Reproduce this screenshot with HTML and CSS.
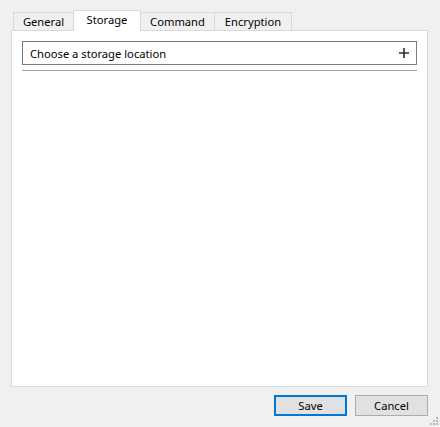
FILE: index.html
```html
<!DOCTYPE html>
<html>
<head>
<meta charset="utf-8">
<link rel="stylesheet" href="styles.css">
</head>
<body>
<div class="window">
  <div class="tabs">
    <div class="tab t-general">General</div>
    <div class="tab t-storage active">Storage</div>
    <div class="tab t-command">Command</div>
    <div class="tab t-encryption">Encryption</div>
  </div>
  <div class="panel">
    <div class="picker">
      <span class="picker-label">Choose a storage location</span>
      <svg class="plus" width="10" height="10" viewBox="0 0 10 10"><path d="M5 0V10M0 5H10" stroke="#2b2b2b" stroke-width="1.6"/></svg>
    </div>
    <div class="sep"></div>
  </div>
  <div class="actions">
    <button class="btn primary">Save</button>
    <button class="btn">Cancel</button>
  </div>
  <div class="grip">
    <svg width="8" height="8" viewBox="0 0 8 8" fill="#b8b8b8">
      <rect x="6" y="0" width="2" height="2"/>
      <rect x="3" y="3" width="2" height="2"/><rect x="6" y="3" width="2" height="2"/>
      <rect x="0" y="6" width="2" height="2"/><rect x="3" y="6" width="2" height="2"/><rect x="6" y="6" width="2" height="2"/>
    </svg>
  </div>
</div>
</body>
</html>
```
FILE: styles.css
```css
html, body {
  margin: 0;
  padding: 0;
  background: #f0f0f0;
}
body {
  font-family: "Noto Sans", "Open Sans", sans-serif;
  font-size: 11.2px;
  color: #000;
}
.window {
  position: relative;
  width: 440px;
  height: 427px;
  padding: 10px 0 0 11px;
  box-sizing: border-box;
}
.tabs {
  display: flex;
  align-items: flex-end;
  height: 20px;
  padding-left: 2px;
  position: relative;
  z-index: 2;
}
.tab {
  box-sizing: border-box;
  height: 18px;
  border: 1px solid #d9d9d9;
  border-bottom: none;
  background: #f0f0f0;
  display: flex;
  align-items: center;
  justify-content: center;
  margin-left: -1px;
  line-height: 1;
  padding-top: 1px;
}
.tab:first-child { margin-left: 0; }
.t-general { width: 61px; }
.t-storage { width: 68px; }
.t-command { width: 75px; }
.t-encryption { width: 78px; }
.tab.active {
  height: 21px;
  margin-bottom: -1px;
  background: #fff;
  position: relative;
  z-index: 3;
  padding-top: 0;
  padding-bottom: 2px;
}
.panel {
  box-sizing: border-box;
  width: 417px;
  height: 357px;
  background: #fff;
  border: 1px solid #d9d9d9;
  padding: 10px;
  position: relative;
  z-index: 1;
}
.picker {
  box-sizing: border-box;
  height: 24px;
  border: 1px solid #7a7a7a;
  display: flex;
  align-items: center;
  justify-content: space-between;
  padding: 1px 7px 0 7px;
}
.picker-label {
  line-height: 1;
}
.plus { display: block; margin-top: -1px; }
.sep {
  height: 1px;
  background: #a0a0a0;
  margin-top: 5px;
}
.actions {
  display: flex;
  justify-content: flex-end;
  gap: 8px;
  padding-right: 12px;
  margin-top: 8px;
}
.btn {
  box-sizing: border-box;
  width: 73px;
  height: 21px;
  margin: 0;
  padding: 0;
  background: #e1e1e1;
  border: 1px solid #adadad;
  font-family: inherit;
  font-size: 11.2px;
  color: #000;
  line-height: 1;
}
.btn.primary {
  border: 2px solid #0078d7;
}
.grip {
  position: absolute;
  right: 2px;
  bottom: 2px;
  line-height: 0;
}
```
